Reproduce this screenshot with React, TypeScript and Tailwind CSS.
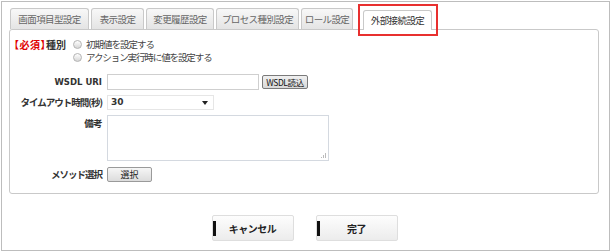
import React from "react";

const tabs = [
  { label: "画面項目型設定", w: "w-[79px]" },
  { label: "表示設定", w: "w-[53px]" },
  { label: "変更履歴設定", w: "w-[68px]" },
  { label: "プロセス種別設定", w: "w-[83px]" },
  { label: "ロール設定", w: "w-[52px]" },
];

const Radio = () => (
  <span className="inline-block w-[9px] h-[9px] rounded-full border border-[#b4b4b4] bg-linear-to-b from-[#ffffff] to-[#d6d6d6]" />
);

const FooterButton = ({ label }: { label: string }) => (
  <button className="relative w-[82px] h-[26px] rounded-[2px] border border-[#dedede] bg-linear-to-b from-[#fdfdfd] to-[#ececec] text-[10px] font-bold text-[#222] tracking-[-0.5px]">
    <span className="absolute left-0 top-[5px] w-[3px] h-[15px] bg-[#111]" />
    {label}
  </button>
);

const App = () => {
  return (
    <div
      className="w-[611px] h-[252px] bg-white pl-px pt-px"
      style={{ fontFamily: '"Noto Sans CJK JP", "DejaVu Sans", sans-serif' }}
    >
      <div className="relative w-[609px] h-[250px] border border-[#bdbdbd] pl-[7px] pt-[6px]">
        {/* tabs */}
        <div className="relative z-10 flex items-end gap-[2px] h-[22px] -mb-px ml-[1px]">
          {tabs.map((t) => (
            <div
              key={t.label}
              className={`${t.w} h-[21px] mb-px flex items-center justify-center rounded-t-[3px] border border-b-0 border-[#c9c9c9] bg-linear-to-b from-[#f8f8f8] to-[#e4e4e4] text-[9.5px] text-[#666] tracking-[-0.6px]`}
            >
              {t.label}
            </div>
          ))}
          <div className="w-[69px] h-[20px] ml-[8px] flex items-center justify-center rounded-t-[3px] border border-b-0 border-[#c9c9c9] bg-white text-[9.5px] text-[#333] tracking-[-0.6px]">
            外部接続設定
          </div>
        </div>
        {/* highlight */}
        <div className="absolute left-[356px] top-[2px] w-[80px] h-[32px] border-2 border-[#e8302f] z-20" />

        {/* panel */}
        <div className="w-[590px] h-[165px] border border-[#c9c9c9] rounded-[3px] bg-white text-[9.5px] text-[#333]">
          <div className="flex items-center h-[13px] mt-[8px] pl-[4px]">
            <span className="w-[59px] text-[10px] font-bold whitespace-nowrap [font-feature-settings:'halt']">
              <span className="text-[#e00000] tracking-[0.5px]">【必須】</span>種別
            </span>
            <Radio />
            <span className="ml-[4px] text-[#444] tracking-[-1px]">初期値を設定する</span>
          </div>
          <div className="flex items-center h-[13px] pl-[63px]">
            <Radio />
            <span className="ml-[4px] text-[#444] tracking-[-1.1px]">
              アクション実行時に値を設定する
            </span>
          </div>

          <div className="flex items-center h-[16px] mt-[10px]">
            <div className="w-[97px] pr-[5px] flex justify-end font-bold whitespace-nowrap">
              <span className="text-[8.5px]" style={{ fontFamily: '"DejaVu Sans", sans-serif' }}>
                WSDL URI
              </span>
            </div>
            <div className="w-[152px] h-[16px] border border-[#cfcfcf] bg-white" />
            <button
              className="ml-[3px] w-[46px] h-[14px] rounded-[2px] border border-[#7a7a7a] bg-linear-to-b from-[#f0f0f0] to-[#d8d8d8] text-[8.5px] leading-none text-[#111] tracking-[-0.4px]"
            >
              WSDL読込
            </button>
          </div>

          <div className="flex items-center h-[15px] mt-[5px]">
            <div className="w-[97px] pr-[5px] flex justify-end font-bold whitespace-nowrap tracking-[-1px]">
              <span>タイムアウト時間(秒)</span>
            </div>
            <div className="relative w-[107px] h-[15px] border border-[#e6e6e6] bg-white flex items-center pl-[3px]">
              <span className="font-bold text-[9px]" style={{ fontFamily: '"DejaVu Sans", sans-serif' }}>
                30
              </span>
              <svg className="absolute right-[5px] top-[5px]" width="6" height="4" viewBox="0 0 6 4">
                <path d="M0 0 H6 L3 4 Z" fill="#222" />
              </svg>
            </div>
          </div>

          <div className="flex items-start h-[46px] mt-[5px]">
            <div className="w-[97px] pr-[5px] pt-[1px] flex justify-end font-bold tracking-[-0.6px]">
              備考
            </div>
            <div className="relative w-[222px] h-[46px] border border-[#d4d9e0] bg-white">
              <svg className="absolute right-[2px] bottom-[2px]" width="5" height="5" viewBox="0 0 5 5">
                <rect x="4" y="0" width="1" height="5" fill="#bbb" />
                <rect x="2" y="2" width="1" height="3" fill="#bbb" />
                <rect x="0" y="4" width="1" height="1" fill="#bbb" />
              </svg>
            </div>
          </div>

          <div className="flex items-center h-[15px] mt-[6px]">
            <div className="w-[97px] pr-[5px] flex justify-end font-bold whitespace-nowrap tracking-[-1px]">
              メソッド選択
            </div>
            <button className="w-[45px] h-[15px] rounded-[2px] border border-[#9a9a9a] bg-linear-to-b from-[#f6f6f6] to-[#dcdcdc] text-[9px] leading-none text-[#222]">
              選択
            </button>
          </div>
        </div>

        {/* footer buttons */}
        <div className="flex justify-center gap-[22px] mt-[21px] pr-[9px]">
          <FooterButton label="キャンセル" />
          <FooterButton label="完了" />
        </div>
      </div>
    </div>
  );
};

export default App;
